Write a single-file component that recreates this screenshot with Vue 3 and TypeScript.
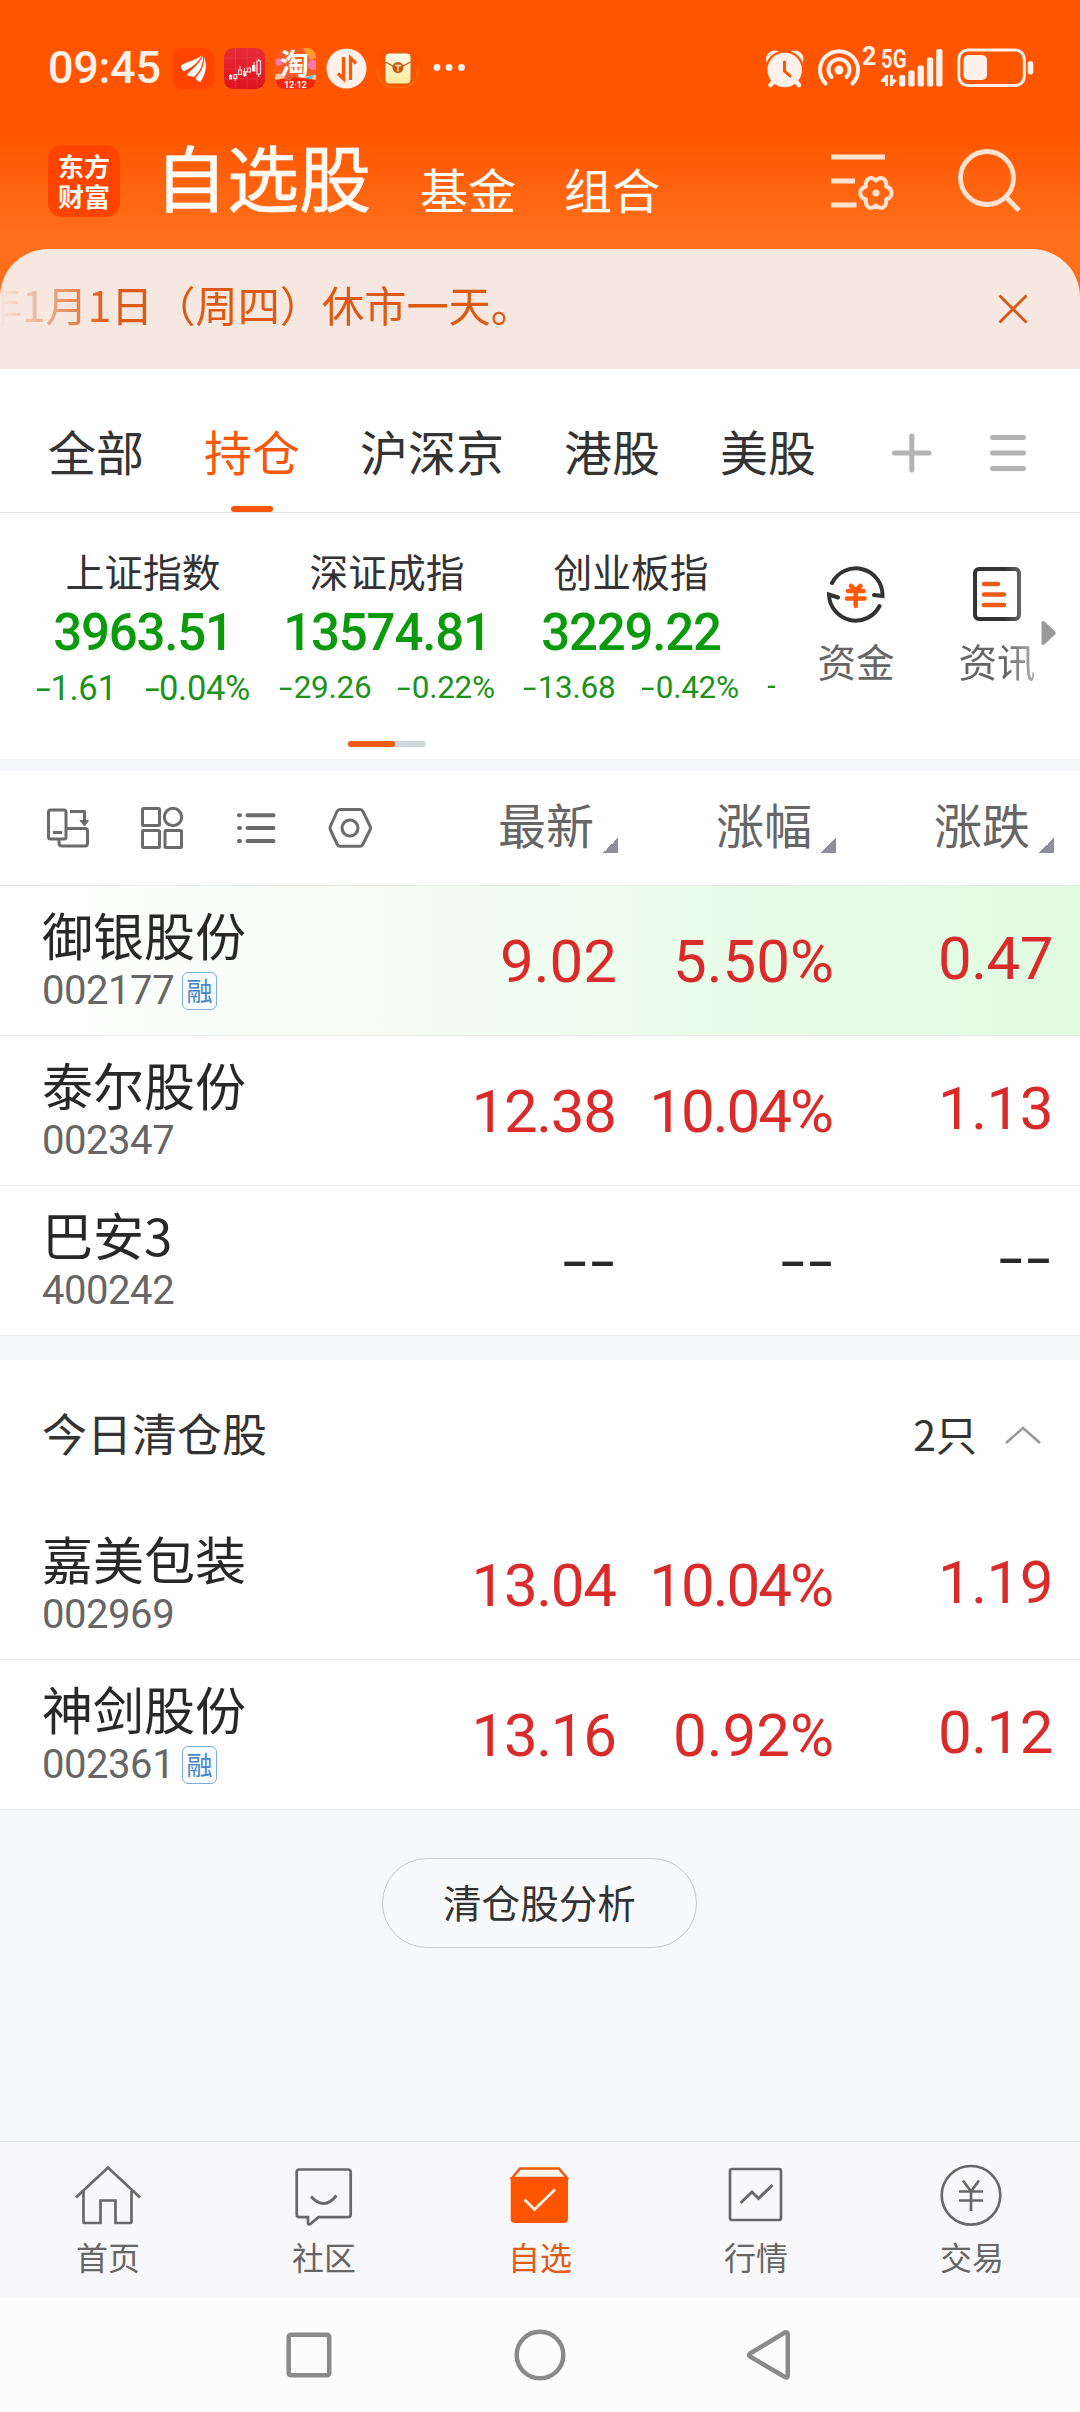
<script setup lang="ts">
interface IndexQuote {
  name: string
  value: string
  change: string
  percent: string
  large?: boolean
}

interface Stock {
  name: string
  code: string
  margin?: boolean
  highlight?: boolean
  price: string
  percent: string
  change: string
}

const groups: string[] = ['全部', '持仓', '沪深京', '港股', '美股']
const activeGroup = '持仓'

const indices: IndexQuote[] = [
  { name: '上证指数', value: '3963.51', change: '1.61', percent: '0.04%', large: true },
  { name: '深证成指', value: '13574.81', change: '29.26', percent: '0.22%' },
  { name: '创业板指', value: '3229.22', change: '13.68', percent: '0.42%' },
]

const columns: string[] = ['最新', '涨幅', '涨跌']

const holdings: Stock[] = [
  { name: '御银股份', code: '002177', margin: true, highlight: true, price: '9.02', percent: '5.50%', change: '0.47' },
  { name: '泰尔股份', code: '002347', price: '12.38', percent: '10.04%', change: '1.13' },
  { name: '巴安3', code: '400242', price: '--', percent: '--', change: '--' },
]

const cleared: Stock[] = [
  { name: '嘉美包装', code: '002969', price: '13.04', percent: '10.04%', change: '1.19' },
  { name: '神剑股份', code: '002361', margin: true, price: '13.16', percent: '0.92%', change: '0.12' },
]

const sections = [
  { key: 'holdings', stocks: holdings },
  { key: 'cleared', stocks: cleared },
]

const tight = (v: string): boolean => /^\d\d/.test(v)
</script>

<template>
  <div class="screen">
    <header class="top">
      <div class="status">
        <span class="clock">09:45</span>
        <svg class="apps" width="300" height="50" viewBox="170 43 300 50">
          <defs>
            <linearGradient id="kred" x1="0" y1="0" x2="0" y2="1">
              <stop offset="0" stop-color="#e82a38" /><stop offset="1" stop-color="#dc1420" />
            </linearGradient>
            <linearGradient id="env" x1="0" y1="0" x2="0" y2="1">
              <stop offset="0" stop-color="#fffbe8" /><stop offset="1" stop-color="#ffe9a0" />
            </linearGradient>
            <clipPath id="tb"><rect x="275" y="48" width="41" height="41" rx="9" /></clipPath>
          </defs>
          <rect x="173" y="48" width="41" height="41" rx="9" fill="#ff4400" />
          <path d="M181 65.500C188 61 195 61 202 55C197 65 191 67 184 71.500C181 69 181 67 181 65.500Z" fill="#fff" />
          <path d="M187 75C192 68 199 66 202.500 55C204.500 63 201 71 194 77C191 76.500 189 76 187 75Z" fill="#fff" />
          <path d="M195.500 78C202 71 205 64 203.200 55.500C207 63 207.500 71 200.500 82C198 81.500 196.500 80 195.500 78Z" fill="#fff" />
          <path d="M183.500 72.500C192 68 199 64 202.800 55M193.500 78C201 71 204.500 64 203.200 55" stroke="#ff4400" stroke-width="1" fill="none" />

          <rect x="224" y="48" width="41" height="41" rx="9" fill="url(#kred)" />
          <path d="M235.500 48V89M247 48V89M257 48V89M224 58H265M224 69H265M224 79H265" stroke="#f05060" stroke-width=".7" opacity=".5" />
          <path d="M230.500 74V77M240 66V69M244.500 68V77M254 62V69" stroke="#ffe4e4" stroke-width="1" />
          <g fill="none" stroke="#ffe4e4" stroke-width="1.200">
            <path d="M233.800 74.500h3v4h-3zM238.500 70h3v4.500h-3zM247.500 68h3v4h-3zM257 61h3.500v13h-3.500zM258.700 59v2M258.700 74v3M235.300 78.500v2.500" />
          </g>
          <path d="M229 75h3.200v4.500H229zM243 71h3.500v5H243zM252 65h3.500v6.500h-3.500z" fill="#ffe4e4" />

          <g clip-path="url(#tb)">
            <rect x="275" y="48" width="41" height="41" fill="#fb5c1c" />
            <path d="M303 48h13v10l-6 2z" fill="#ff9440" />
            <circle cx="309" cy="51" r="4" fill="#ffa030" />
            <circle cx="313" cy="65" r="5" fill="#f878b0" />
            <circle cx="279" cy="62" r="3.500" fill="#f878b0" />
            <path d="M274 75q9-4 13 5l15-3 14-2v10h-42z" fill="#ffc9a0" />
            <path d="M302 79l13-5-4 6z" fill="#54c8e8" />
            <path d="M275 80q20-5 41 0v9h-41z" fill="#f2280c" />
            <circle cx="288" cy="77" r="3.500" fill="#f05a48" />
          </g>
          <text x="280" y="75" class="tao">淘</text>
          <text x="284" y="88" class="dd" textLength="23">12·12</text>

          <circle cx="346.500" cy="68.500" r="20" fill="#fff1ea" />
          <path d="M343.500 57V79L338 73.500M350.500 80V58L356 63.500" fill="none" stroke="#ff5500" stroke-width="3.200" />

          <rect x="377" y="48" width="41" height="41" rx="9" fill="#ff5200" />
          <path d="M378 68q0 16 12 19h16q12-3 12-19" fill="none" stroke="#ff7415" stroke-width="2" opacity=".6" />
          <rect x="385" y="53" width="26" height="31" rx="4" fill="url(#env)" stroke="#ce6210" stroke-width="1" />
          <path d="M385.500 62L394 66.500H402L410.500 62" fill="none" stroke="#c85a10" stroke-width="1.300" />
          <circle cx="398" cy="67.500" r="5.500" fill="#c95808" />
          <path d="M395 65.500h6M398 65.500v6" stroke="#ffe9c0" stroke-width="1.300" />

          <g fill="#fff1ea"><circle cx="437" cy="67.500" r="3.400" /><circle cx="449" cy="67.500" r="3.400" /><circle cx="461.500" cy="67.500" r="3.400" /></g>
        </svg>
        <svg class="signals" width="276" height="50" viewBox="762 43 276 50">
          <g fill="#fff1ea">
            <circle cx="774.500" cy="59" r="8.500" /><circle cx="795" cy="59" r="8.500" />
            <circle cx="784.700" cy="70" r="19.600" fill="#ff5500" />
            <circle cx="784.700" cy="70" r="17.300" />
            <circle cx="839" cy="70" r="4.500" />
            <rect x="899" y="75" width="6.300" height="11.500" rx="2" /><rect x="908.300" y="70.500" width="6.300" height="16" rx="2" />
            <rect x="917.600" y="65.500" width="6.300" height="21" rx="2" /><rect x="926.900" y="57.500" width="6.300" height="29" rx="2" />
            <rect x="936.200" y="49" width="6.300" height="37.500" rx="2" />
            <rect x="963.500" y="55" width="23.500" height="25" rx="5" />
            <rect x="1027.700" y="61" width="5.600" height="13.500" rx="2.800" />
            <path d="M881 80L886 75V82H881ZM885 75H888V86H885ZM897 80L892 86V79ZM890 75H893V86H890Z" />
          </g>
          <g fill="none" stroke="#fff1ea" stroke-width="4" stroke-linecap="round">
            <path d="M773 82L770.500 85M796.500 82L799 85" stroke-width="4.500" />
            <path d="M784.500 62V71L790 76" stroke="#ff5500" stroke-width="3" />
            <path d="M825.500 83.500A19 19 0 1 1 852.500 83.500M831.500 77A10.500 10.500 0 1 1 846.500 77" />
          </g>
          <rect x="958.800" y="50" width="65.500" height="35.500" rx="9" fill="none" stroke="#fff1ea" stroke-width="3" />
          <text x="862" y="65" class="sig" font-size="25">2</text>
          <text x="881" y="67.500" class="sig" font-size="25" textLength="25.500" lengthAdjust="spacingAndGlyphs">5G</text>
        </svg>
      </div>

      <div class="titlebar">
        <div class="logo"><span>东方</span><span>财富</span></div>
        <span class="title">自选股</span>
        <span class="sub">基金</span>
        <span class="sub">组合</span>
        <svg class="titleicons" width="210" height="80" viewBox="820 140 210 80" fill="none" stroke="#ffe3d0" stroke-width="4.800">
          <path d="M831 157H885M831 181H855M831 205H856.500" />
          <path d="M869 178.500Q872.500 177 875.900 180.500Q879.500 177 883 178.500Q887 181 886 186.500Q891.500 188 891.500 193Q891.500 198 886 199.500Q887 205 883 207.500Q879.500 209 875.900 205.500Q872.500 209 869 207.500Q865 205 866 199.500Q860.300 198 860.300 193Q860.300 188 866 186.500Q865 181 869 178.500Z" stroke-width="4" stroke-linejoin="round" />
          <circle cx="875.900" cy="193" r="3.600" fill="#ffe3d0" stroke="none" />
          <circle cx="987" cy="178" r="26.500" /><path d="M1005 196L1019 210.500" />
        </svg>
      </div>

      <div class="notice">
        <div class="marquee"><span>年1月1日（周四）休市一天。</span></div>
        <svg width="32" height="32" viewBox="-16 -16 32 32"><path d="M-13.500-13.500L13.500 13.500M13.500-13.500L-13.500 13.500" stroke="#d45a1a" stroke-width="3" /></svg>
      </div>
    </header>

    <nav class="groups">
      <span v-for="g in groups" :key="g" :class="['group', { active: g === activeGroup }]">{{ g }}</span>
      <svg class="groupicons" width="130" height="50" viewBox="890 427.500 140 50" stroke="#b3b3b3" stroke-width="5" stroke-linecap="round">
        <path d="M894.500 452.500H929M911.800 435.500V469.500M992.500 437H1023.500M992.500 452.500H1023.500M992.500 468H1023.500" />
      </svg>
    </nav>

    <section class="market">
      <div class="strip">
        <div v-for="q in indices" :key="q.name" class="index">
          <div class="iname">{{ q.name }}</div>
          <div class="ivalue">{{ q.value }}</div>
          <div :class="['ichange', { large: q.large }]">
            <span><i>-</i>{{ q.change }}</span><span><i>-</i>{{ q.percent }}</span>
          </div>
        </div>
        <div class="index next"><div class="ichange"><span><i>-</i></span></div></div>
      </div>
      <div class="tool">
        <svg width="60" height="60" viewBox="826 564 60 60" fill="none" stroke="#333" stroke-width="4" stroke-linecap="round">
          <path d="M832 583A26.700 26.700 0 0 1 882.500 596L874 595M879.500 606A26.700 26.700 0 0 1 829 594.500L838 597.500" />
          <path d="M851 586L855.700 590.500L860.500 586M848 591H863.500M847 598.500H864.500M855.700 591V606" stroke="#ff5a08" stroke-width="4.500" />
        </svg>
        <span>资金</span>
      </div>
      <div class="tool fade">
        <svg width="60" height="60" viewBox="967 564 60 60" fill="none" stroke="#333" stroke-width="4" stroke-linecap="round">
          <rect x="975" y="569" width="44" height="50" rx="4" />
          <path d="M984 584H998M984 594.500H1004M984 605H1004" stroke="#ea5c14" stroke-width="4.500" />
        </svg>
        <span>资讯</span>
      </div>
      <svg class="more" width="16" height="26" viewBox="0 0 16 26"><path d="M.5 3Q.5-.5 4 2L14 11.500Q15.500 13 14 14.500L4 24Q.5 26.500.5 23Z" fill="#999" /></svg>
      <div class="pager"><i></i></div>
    </section>

    <section class="head">
      <svg width="340" height="50" viewBox="40 803 340 50" fill="none" stroke="#6b6b6b" stroke-width="3" stroke-linejoin="round">
        <rect x="48.500" y="810" width="17.500" height="29" rx="2" /><path d="M53 832.500H62M59 840V843Q59 846 62 846H85Q87.500 846 87.500 843V831Q87.500 828.500 85 828.500H66M70 811.500H84.500V821" />
        <path d="M80 820.500H88.500L84.500 826Z" fill="#6b6b6b" stroke-width="1" />
        <rect x="142.500" y="808.500" width="17" height="17" rx="1" /><circle cx="173" cy="817" r="8.700" /><rect x="142.500" y="830.500" width="17" height="17" rx="1" /><rect x="165" y="830.500" width="16.500" height="17" rx="1" />
        <path d="M247.500 815.200H273.500M247.500 828H273.500M247.500 841H273.500M239 815.200H240M239 828H240M239 841H240" stroke-width="4" stroke-linecap="round" />
        <path d="M340 809.500H360Q362 809.500 363 811.500L370 826Q371 828 370 830L363 844Q362 846.300 360 846.300H340Q338 846.300 337 844L330.500 830Q329.500 828 330.500 826L337 811.500Q338 809.500 340 809.500Z" /><circle cx="350" cy="828" r="8" />
      </svg>
      <div v-for="c in columns" :key="c" class="col">{{ c }}<b></b></div>
    </section>

    <template v-for="s in sections" :key="s.key">
      <section v-if="s.key === 'cleared'" class="clearhead">
        <span>今日清仓股</span>
        <span class="count">2只</span>
        <svg width="36" height="20" viewBox="0 0 36 20"><path d="M1 18L18 3L35 18" fill="none" stroke="#999" stroke-width="2.500" /></svg>
      </section>
      <div v-for="st in s.stocks" :key="st.code" :class="['row', { hl: st.highlight, flat: st.price === '--' }]">
        <div class="ident">
          <div class="name">{{ st.name }}</div>
          <div class="code"><span>{{ st.code }}</span><em v-if="st.margin">融</em></div>
        </div>
        <div :class="['num', { tight: tight(st.price) }]"><span>{{ st.price }}</span></div>
        <div :class="['num', 'pct', { tight: tight(st.percent) }]"><span>{{ st.percent }}</span></div>
        <div class="num last"><span>{{ st.change }}</span></div>
      </div>
    </template>

    <main class="rest"><button>清仓股分析</button></main>

    <nav class="tabbar">
      <div class="tab">
        <svg width="70" height="70" viewBox="73 2160 70 70"><path d="M76 2197.500L108 2167.500L140 2197.500M83.500 2191V2221.500Q83.500 2223 85 2223H100.500V2200.500H115.500V2223H130Q131.500 2223 131.500 2221.500V2191" /></svg>
        <span>首页</span>
      </div>
      <div class="tab">
        <svg width="70" height="70" viewBox="289 2160 70 70"><path d="M299.500 2169.500H348Q350.700 2169.500 350.700 2172V2214.500Q350.700 2217.200 348 2217.200H318.500L310 2224.200Q308 2225 308 2223V2217.200H299.500Q296.700 2217.200 296.700 2214.500V2172Q296.700 2169.500 299.500 2169.500Z" /><path d="M311 2196.500Q324 2211 336.500 2195.500" stroke-width="3" /></svg>
        <span>社区</span>
      </div>
      <div class="tab on">
        <svg width="70" height="70" viewBox="505 2160 70 70"><path d="M512 2178L520 2168.500H559L567 2178Z" stroke="#e85a10" fill="#fff4ee" stroke-width="2.500" /><path d="M510.700 2177H568V2219Q568 2223 564 2223H515Q510.700 2223 510.700 2219Z" fill="#ff5500" stroke="none" /><path d="M524.500 2199.500L534.500 2209.500L555 2189.500" stroke="#fff0e8" /></svg>
        <span>自选</span>
      </div>
      <div class="tab">
        <svg width="70" height="70" viewBox="721 2160 70 70"><rect x="730" y="2169" width="51" height="51" rx="2" /><path d="M740.500 2203L752 2192L758.500 2198.500L772.500 2185" stroke-width="3" /></svg>
        <span>行情</span>
      </div>
      <div class="tab">
        <svg width="70" height="70" viewBox="937 2160 70 70"><circle cx="971" cy="2195.300" r="29.300" /><path d="M963 2180.500L971 2191.500L979 2180.500M959 2191.500H983M959 2200.500H983M971 2191.500V2211" /></svg>
        <span>交易</span>
      </div>
    </nav>

    <footer class="sysnav">
      <svg width="520" height="60" viewBox="280 2325 520 60" fill="none" stroke="#8a8a8a" stroke-width="4.500" stroke-linejoin="round">
        <rect x="288.700" y="2334.700" width="40.500" height="40.500" rx="2" /><circle cx="540" cy="2355" r="23.300" /><path d="M750 2353.500L784.500 2332.700Q787.800 2331.500 787.800 2334.500V2375.500Q787.800 2378.500 784.500 2376.800L750 2356.500Q748 2355 750 2353.500Z" />
      </svg>
    </footer>
  </div>
</template>

<style>
body { margin: 0; background: #fefefe; }
</style>

<style scoped>
.screen { width: 1080px; height: 2412px; overflow: hidden; display: flex; flex-direction: column; background: #fefefe; color: #333; font-family: "Noto Sans CJK SC", sans-serif; }
.screen * { box-sizing: border-box; }
.screen > * { flex: none; }
svg { display: block; flex: none; }
i, em { font-style: normal; }

.top { height: 369px; background: linear-gradient(#ff5500 130px, #ff6f1a 235px); }
.status { height: 135px; display: flex; padding-top: 43px; }
.clock { width: 122px; margin-left: 48px; font: 500 45px/50px Roboto, sans-serif; letter-spacing: -.300px; color: #fff1ea; white-space: nowrap; }
.signals { margin-left: 292px; }
.tao { font: 700 29px "Noto Sans CJK SC", sans-serif; fill: #fff; }
.dd { font: 500 9.500px Roboto, sans-serif; fill: #fff; }
.sig { font-family: Roboto, sans-serif; font-weight: 700; fill: #fff1ea; }

.titlebar { height: 114px; display: flex; align-items: flex-start; color: #fffaf4; }
.logo { width: 72px; height: 72px; margin: 10px 35px 0 48px; border-radius: 14px; background: #ff4400; display: flex; flex-direction: column; align-items: center; padding-top: 6px; font-weight: 700; font-size: 26px; line-height: 30px; }
.title { margin-top: 4px; width: 265px; font-size: 72px; line-height: 72px; -webkit-text-stroke: .700px #fffaf4; }
.sub { margin-top: 29px; width: 144px; font-size: 48px; line-height: 48px; }
.titleicons { margin: 5px 0 0 112px; }

.notice { height: 120px; border-radius: 48px 48px 0 0; background: #f6e7e0; display: flex; align-items: center; }
.marquee { width: 533px; height: 120px; margin-right: 463.500px; display: flex; justify-content: flex-end; overflow: hidden; white-space: nowrap; color: #dc5a14; font-size: 42.200px; line-height: 110px; -webkit-mask-image: linear-gradient(90deg, transparent, #000 110px); mask-image: linear-gradient(90deg, transparent, #000 110px); }

.groups { height: 144px; display: flex; align-items: flex-start; gap: 60px; padding: 57px 0 0 48px; border-bottom: 1px solid #e4e4e4; }
.group { position: relative; font-size: 48px; line-height: 48px; }
.active { color: #f45a0c; }
.active::after { content: ""; position: absolute; left: 27px; top: 80px; width: 42px; height: 6px; border-radius: 3px; background: #f9560a; }
.groupicons { width: 140px; margin: 2px 0 0 14px; }

.market { position: relative; height: 246px; display: flex; }
.strip { width: 775px; padding-left: 21px; display: flex; overflow: hidden; }
.index { flex: none; width: 244px; display: flex; flex-direction: column; align-items: center; padding-top: 38px; }
.iname { font-size: 38.800px; line-height: 39px; }
.ivalue { margin-top: 17px; font: 500 51px/51px Roboto, sans-serif; letter-spacing: -1.200px; color: #0a9a0c; }
.ichange { margin-top: 13px; display: flex; gap: 26px; font: 400 31.500px/34px Roboto, sans-serif; letter-spacing: -.300px; color: #1c931c; white-space: nowrap; }
.ichange i { display: inline-block; width: 14.500px; transform: scaleX(1.550); transform-origin: 0 50%; }
.large { font-size: 34.500px; gap: 28px; }
.next { align-items: flex-start; padding: 143px 0 0 14px; }
.tool { display: flex; flex-direction: column; align-items: center; width: 78px; margin: 51px 0 0 42px; font-size: 38.500px; line-height: 39px; color: #666; }
.tool span { margin-top: 17px; }
.fade { margin-left: 63px; -webkit-mask-image: linear-gradient(90deg, #000 60%, rgba(0, 0, 0, .5)); mask-image: linear-gradient(90deg, #000 60%, rgba(0, 0, 0, .5)); }
.more { margin: 107px 0 0 5px; }
.pager { position: absolute; left: 348px; top: 228px; width: 78px; height: 6px; border-radius: 3px; background: #d2d6da; }
.pager i { display: block; width: 47px; height: 6px; border-radius: 3px; background: #f05a12; }

.head { height: 127px; border-top: 12px solid #f6f7fa; border-bottom: 1px solid #e9ebea; display: flex; align-items: flex-start; padding: 0 26px 0 40px; }
.head svg { margin: 32px 20px 0 0; }
.col { flex: none; width: 218px; display: flex; justify-content: flex-end; padding-top: 28px; font-size: 48px; line-height: 48px; color: #666; }
.col b { width: 15px; height: 15px; margin: 39px 0 0 9px; background: linear-gradient(135deg, transparent 50%, #8e8f98 50%); }

.row { height: 150px; border-bottom: 1px solid #ebebeb; display: flex; padding: 0 26px 0 42px; color: #d92c2a; }
.hl { background: linear-gradient(90deg, #fefefe 3%, #f5fdf5 38%, #e9fce9 68%, #dffbe1); }
.ident { width: 358px; padding-top: 23px; }
.name { font-size: 51px; line-height: 51px; color: #282828; }
.code { display: flex; margin-top: 11px; font: 400 40px/40px Roboto, sans-serif; letter-spacing: -.450px; color: #666; }
.code span { width: 140px; }
.code em { width: 35px; height: 38px; margin-top: 1px; border: 1.500px solid #82acd8; border-radius: 6px; background: #f7fcff; color: #4a86c6; font: 400 26px/33px "Noto Sans CJK SC", sans-serif; letter-spacing: 0; text-align: center; display: flex; justify-content: center; }
.num { flex: none; width: 218px; padding: 46px 1px 0 0; text-align: right; font: 400 60px/60px Roboto, sans-serif; }
.num.pct { padding-right: 2px; }
.num.tight { letter-spacing: -1.300px; padding-right: 2.300px; }
.num.pct.tight { letter-spacing: -2px; padding-right: 4px; }
.num.last { padding-top: 43px; letter-spacing: -.500px; }
.flat .num { color: #282828; padding-right: 0; letter-spacing: 2.600px; }
.flat .num span { display: inline-block; transform: scaleX(1.450); transform-origin: 100% 50%; }

.clearhead { height: 174px; border-top: 24px solid #f6f7f9; display: flex; align-items: center; padding: 0 39px 0 42px; font-size: 45px; line-height: 50px; }
.clearhead span { margin-top: -5px; }
.clearhead .count { margin: -4px 28px 0 auto; font-size: 41px; }

.rest { flex: 1 !important; background: #f6f7f9; display: flex; justify-content: center; align-items: flex-start; padding: 48px 1px 0 0; }
.rest button { width: 315px; height: 90px; padding: 0 0 4px; border: 1.500px solid #c6c8cb; border-radius: 46px; background: #f8f9fb; color: #333; font: 400 38.600px/40px "Noto Sans CJK SC", sans-serif; }

.tabbar { height: 157px; border-top: 1px solid #e3e4e6; background: #f8f8fa; display: flex; }
.tab { width: 216px; display: flex; flex-direction: column; align-items: center; padding-top: 18px; font-size: 32px; line-height: 32px; color: #666; }
.tab svg { fill: none; stroke: #696969; stroke-width: 2.700; }
.tab span { margin-top: 10px; }
.on { color: #de5c18; }

.sysnav { height: 114px; background: #fcfcfc; display: flex; padding: 27px 0 0 280px; }
</style>
